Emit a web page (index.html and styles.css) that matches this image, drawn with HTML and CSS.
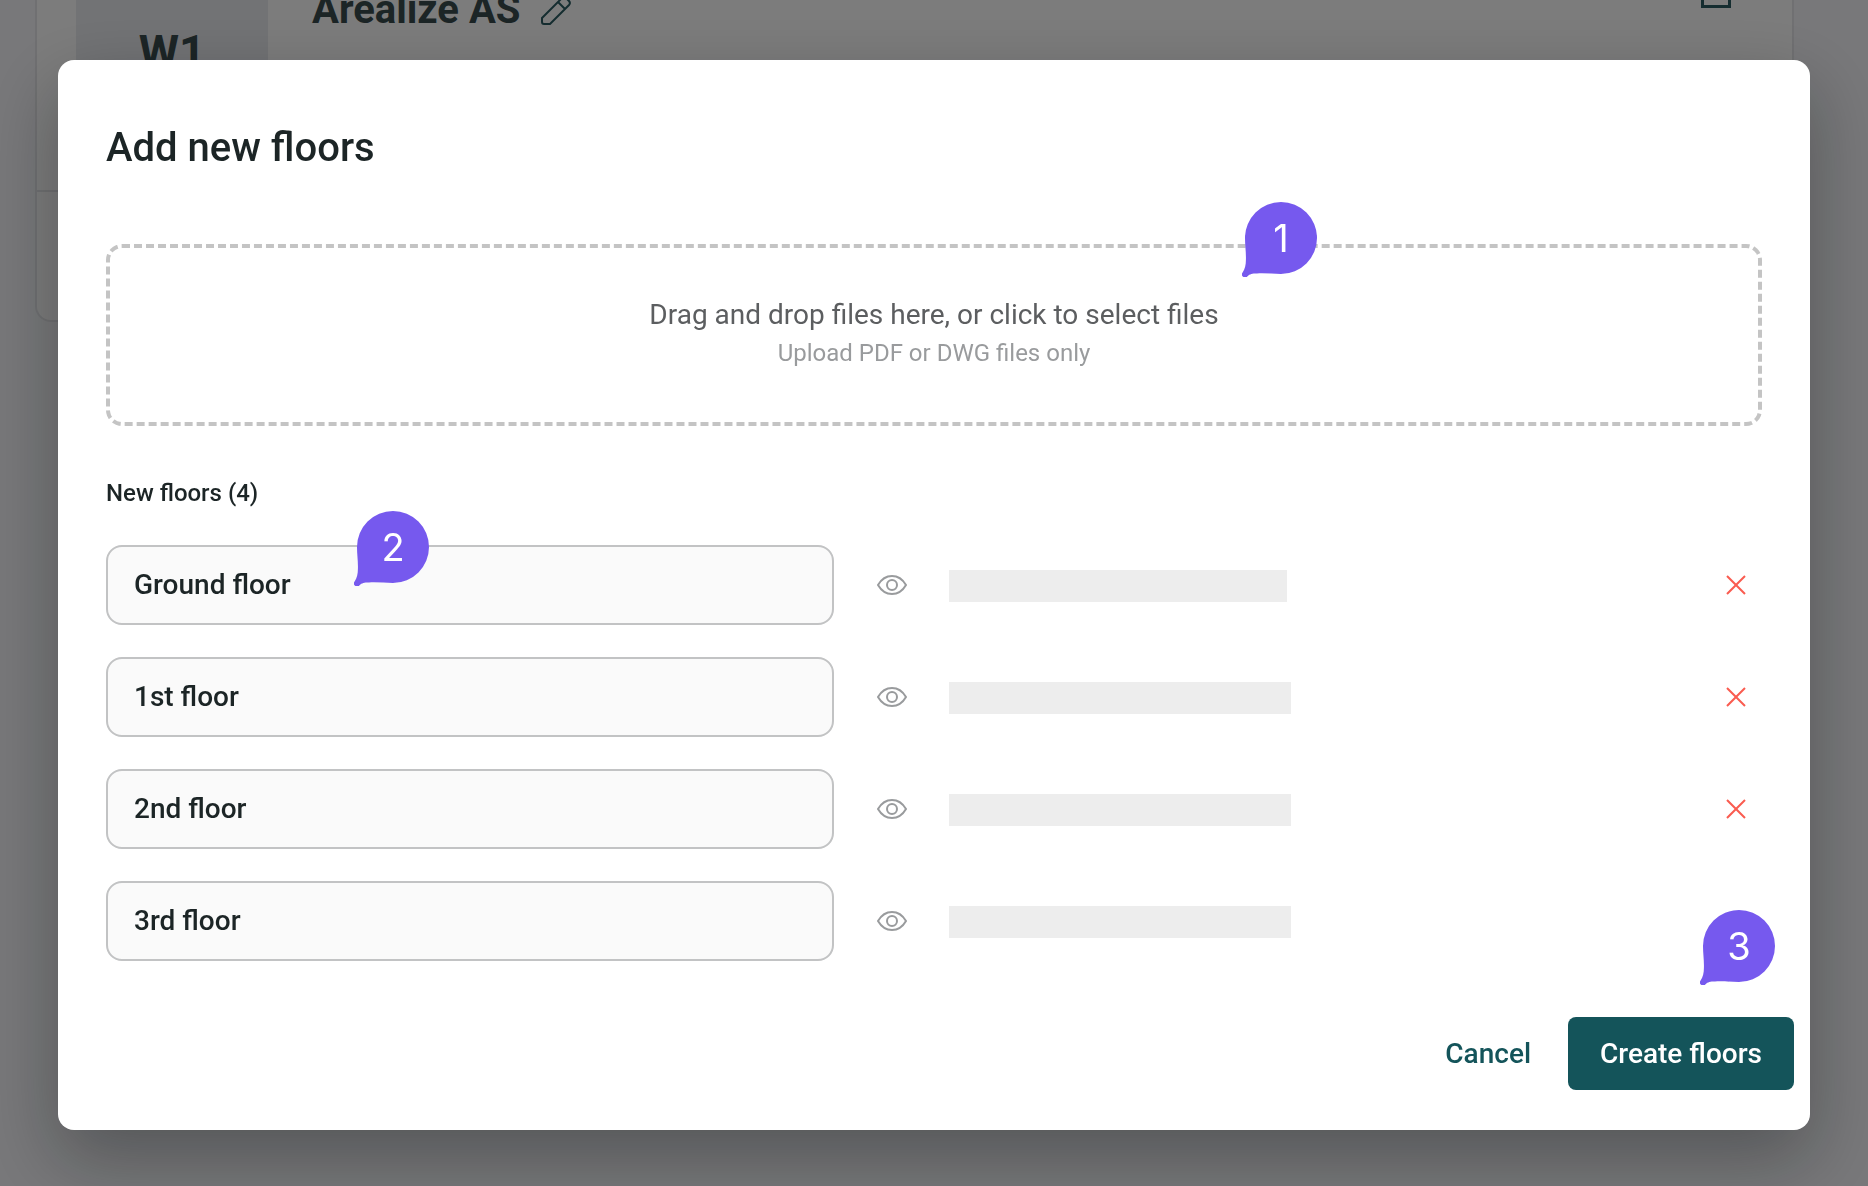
FILE: index.html
```html
<!DOCTYPE html>
<html lang="en">
<head>
<meta charset="utf-8">
<meta name="viewport" content="width=device-width, initial-scale=1">
<title>Add new floors</title>
<link rel="stylesheet" href="styles.css">
</head>
<body>
<svg class="sprite" aria-hidden="true">
  <symbol id="icon-eye" viewBox="0 0 30 20">
    <path d="M1 10C4.500 4 9.500 1 15 1s10.500 3 14 9c-3.500 6-8.500 9-14 9S4.500 16 1 10z"/>
    <circle cx="15" cy="10" r="5"/>
  </symbol>
  <symbol id="icon-close" viewBox="0 0 20 20">
    <path d="M1 1l18 18M19 1L1 19"/>
  </symbol>
  <symbol id="icon-bubble" viewBox="0 0 75 75">
    <path d="M39 0a36 36 0 0 1 0 72C31 72 23 71 15 71.500 10 71.500 8 72 5.500 74.200A3 3 0 0 1 .6 70.400C3 67 3.900 63 3.900 58 4.200 50 3 44 3 36A36 36 0 0 1 39 0z"/>
  </symbol>
</svg>

<main class="page">
  <section class="project">
    <header class="project-head">
      <div class="project-thumb">W1</div>
      <h1 class="project-name">Arealize AS</h1>
      <svg class="project-edit" viewBox="0 0 32 32" aria-hidden="true">
        <path d="M2 24L22 4a3 3 0 0 1 4 0l3 3a3 3 0 0 1 0 4L10 30H4a2 2 0 0 1-2-2zM18 8l7 7"/>
      </svg>
      <span class="project-box"></span>
    </header>
  </section>
</main>

<div class="overlay">
  <form class="modal" role="dialog" aria-labelledby="modal-title">
    <h2 class="modal-title" id="modal-title">Add new floors</h2>

    <button class="dropzone" type="button">
      <span class="dropzone-title">Drag and drop files here, or click to select files</span>
      <span class="dropzone-hint">Upload PDF or DWG files only</span>
      <span class="badge badge-drop"><svg class="badge-shape"><use href="#icon-bubble"/></svg><span class="badge-number">1</span></span>
    </button>

    <h3 class="list-title">New floors (4)</h3>
    <ul class="floors">
      <li class="floor">
        <input class="floor-name" type="text" value="Ground floor" aria-label="Floor 1 name">
        <button class="icon-button" type="button" aria-label="Preview Ground floor"><svg class="eye"><use href="#icon-eye"/></svg></button>
        <span class="file file-short"></span>
        <button class="icon-button remove" type="button" aria-label="Remove Ground floor"><svg class="close"><use href="#icon-close"/></svg></button>
        <span class="badge badge-name"><svg class="badge-shape"><use href="#icon-bubble"/></svg><span class="badge-number">2</span></span>
      </li>
      <li class="floor">
        <input class="floor-name" type="text" value="1st floor" aria-label="Floor 2 name">
        <button class="icon-button" type="button" aria-label="Preview 1st floor"><svg class="eye"><use href="#icon-eye"/></svg></button>
        <span class="file"></span>
        <button class="icon-button remove" type="button" aria-label="Remove 1st floor"><svg class="close"><use href="#icon-close"/></svg></button>
      </li>
      <li class="floor">
        <input class="floor-name" type="text" value="2nd floor" aria-label="Floor 3 name">
        <button class="icon-button" type="button" aria-label="Preview 2nd floor"><svg class="eye"><use href="#icon-eye"/></svg></button>
        <span class="file"></span>
        <button class="icon-button remove" type="button" aria-label="Remove 2nd floor"><svg class="close"><use href="#icon-close"/></svg></button>
      </li>
      <li class="floor">
        <input class="floor-name" type="text" value="3rd floor" aria-label="Floor 4 name">
        <button class="icon-button" type="button" aria-label="Preview 3rd floor"><svg class="eye"><use href="#icon-eye"/></svg></button>
        <span class="file"></span>
      </li>
    </ul>

    <footer class="actions">
      <button class="button button-text" type="button">Cancel</button>
      <button class="button button-primary" type="submit">Create floors</button>
      <span class="badge badge-create"><svg class="badge-shape"><use href="#icon-bubble"/></svg><span class="badge-number">3</span></span>
    </footer>
  </form>
</div>
</body>
</html>
```

FILE: styles.css
```css
* {
  box-sizing: border-box;
}

body {
  margin: 0;
  min-height: 100vh;
  overflow: hidden;
  background: #f0f1f4;
  color: #1c2526;
  font-family: Roboto, "Liberation Sans", sans-serif;
}

button,
input {
  font: inherit;
  color: inherit;
}

button {
  padding: 0;
  border: 0;
  background: none;
  cursor: pointer;
}

h1,
h2,
h3 {
  margin: 0;
}

.sprite {
  display: none;
}

/* Project card behind the dialog */
.page {
  padding: 0 74px 0 35px;
  color: #384a4c;
}

.project {
  height: 322px;
  border: 2px solid #e0e1e4;
  border-top: 0;
  border-radius: 0 0 16px 16px;
  background: #f9f9f9;
}

.project-head {
  display: flex;
  align-items: flex-start;
  height: 192px;
  padding: 0 61px 0 39px;
  border-bottom: 2px solid #e0e1e4;
}

.project-thumb {
  width: 192px;
  height: 120px;
  padding-top: 24px;
  background: #e4e6ea;
  font-size: 46px;
  font-weight: 700;
  line-height: 56px;
  text-align: center;
}

.project-name {
  margin: -14px 20px 0 44px;
  font-size: 40px;
  line-height: 48px;
}

.project-edit {
  width: 32px;
  height: 32px;
  margin-top: -6px;
  fill: none;
  stroke: #2a5a60;
  stroke-width: 2;
}

.project-box {
  width: 30px;
  height: 30px;
  margin: -22px 0 0 auto;
  border: 3px solid #2a5a60;
}

/* Dialog */
.overlay {
  position: fixed;
  inset: 0;
  padding: 60px 58px;
  background: rgba(0, 0, 0, 0.5);
}

.modal {
  display: flex;
  flex-direction: column;
  padding: 60px 48px 40px;
  border-radius: 16px;
  background: #fff;
  box-shadow: 0 28px 72px rgba(8, 12, 16, 0.32);
}

.modal-title {
  margin-bottom: 68px;
  font-size: 40px;
  font-weight: 500;
  line-height: 56px;
}

.dropzone {
  position: relative;
  display: flex;
  flex-direction: column;
  align-items: center;
  justify-content: center;
  height: 182px;
  padding-bottom: 4px;
  border: 4px dashed #c4c4c4;
  border-radius: 16px;
}

.dropzone-title {
  color: #5c5e60;
  font-size: 28px;
  line-height: 40px;
}

.dropzone-hint {
  color: #999b9d;
  font-size: 24px;
  line-height: 36px;
}

.list-title {
  margin: 49px 0 34px;
  font-size: 24px;
  font-weight: 500;
  line-height: 36px;
}

.floors {
  display: grid;
  gap: 32px;
  margin: 0;
  padding: 0;
  list-style: none;
}

.floor {
  position: relative;
  display: grid;
  grid-template-columns: 91fr 115px 95fr 52px;
  align-items: center;
}

.floor-name {
  width: 100%;
  height: 80px;
  padding: 0 26px 2px;
  border: 2px solid #c2c3c4;
  border-radius: 16px;
  background: #fafafa;
  font-size: 28px;
  font-weight: 500;
}

.icon-button {
  display: flex;
  justify-content: center;
}

.icon-button svg {
  fill: none;
  stroke: #999b9d;
  stroke-width: 2;
}

.icon-button .close {
  stroke: #fa5c50;
}

.eye {
  width: 30px;
  height: 20px;
}

.close {
  width: 20px;
  height: 20px;
}

.file {
  width: 342px;
  height: 32px;
  margin-top: 2px;
  background: #ededed;
}

.file-short {
  width: 338px;
}

.actions {
  position: relative;
  display: flex;
  justify-content: flex-end;
  margin: 56px -32px 0 0;
}

.button {
  height: 73px;
  padding: 0 32px;
  border-radius: 8px;
  font-size: 28px;
  font-weight: 500;
}

.button-text {
  padding: 0 37px;
  color: #14545a;
}

.button-primary {
  background: #14545a;
  color: #fff;
}

/* Numbered callouts lying over the dialog */
.badge {
  position: absolute;
  width: 75px;
  height: 75px;
}

.badge-shape {
  display: block;
  width: 75px;
  height: 75px;
  fill: #7659ee;
}

.badge-number {
  position: absolute;
  inset: 0 0 3px 3px;
  color: #fff;
  font-family: Inter, Roboto, sans-serif;
  font-size: 38px;
  font-weight: 400;
  line-height: 72px;
  text-align: center;
}

.badge-drop {
  top: -46px;
  right: 441px;
}

.badge-name {
  top: -34px;
  left: 248px;
}

.badge-create {
  top: -107px;
  right: 19px;
}
```
